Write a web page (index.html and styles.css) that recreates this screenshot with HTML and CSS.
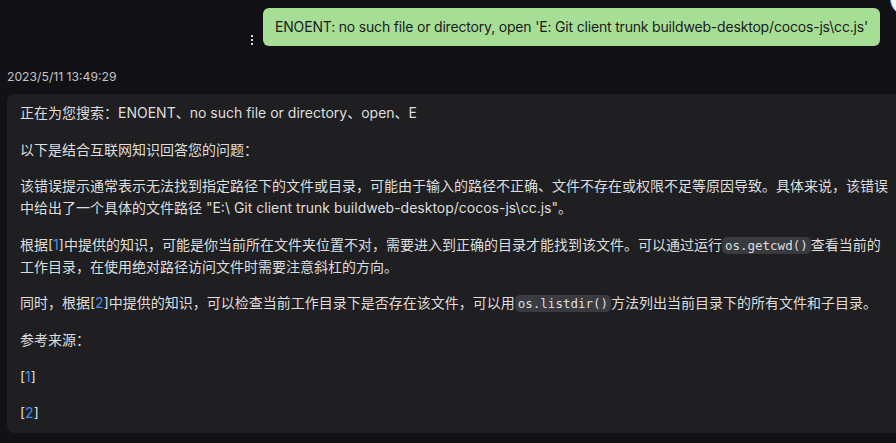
FILE: index.html
```html
<!DOCTYPE html>
<html lang="zh-CN">
<head>
<meta charset="utf-8">
<title>Chat</title>
<link rel="stylesheet" href="styles.css">
</head>
<body>
<div class="chat">
  <div class="user-row">
    <div class="more"><span></span><span></span><span></span></div>
    <div class="bubble">ENOENT: no such file or directory, open 'E: Git client trunk buildweb-desktop/cocos-js\cc.js'</div>
    <div class="avatar"></div>
  </div>
  <div class="time">2023/5/11 13:49:29</div>
  <div class="card">
    <p>正在为您搜索：ENOENT、no such file or directory、open、E</p>
    <p>以下是结合互联网知识回答您的问题：</p>
    <p>该错误提示通常表示无法找到指定路径下的文件或目录，可能由于输入的路径不正确、文件不存在或权限不足等原因导致。具体来说，该错误中给出了一个具体的文件路径 "E:\ Git client trunk buildweb-desktop/cocos-js\cc.js"。</p>
    <p>根据[<a href="#">1</a>]中提供的知识，可能是你当前所在文件夹位置不对，需要进入到正确的目录才能找到该文件。可以通过运行<code>os.getcwd()</code>查看当前的工作目录，在使用绝对路径访问文件时需要注意斜杠的方向。</p>
    <p>同时，根据[<a href="#">2</a>]中提供的知识，可以检查当前工作目录下是否存在该文件，可以用<code>os.listdir()</code>方法列出当前目录下的所有文件和子目录。</p>
    <p>参考来源：</p>
    <p>[<a href="#">1</a>]</p>
    <p>[<a href="#">2</a>]</p>
  </div>
</div>
</body>
</html>
```

FILE: styles.css
```css
html, body {
  margin: 0;
  padding: 0;
  background: #111116;
  overflow: hidden;
}
body {
  width: 896px;
  height: 443px;
  font-family: "Inter", "Noto Sans CJK SC", sans-serif;
  font-size: 14px;
  color: #dedede;
}
.chat {
  position: relative;
  padding: 8px 0 0 7px;
}
.user-row {
  display: flex;
  justify-content: flex-end;
  align-items: flex-end;
  padding-right: 16px;
  gap: 10px;
}
.more {
  display: flex;
  flex-direction: column;
  gap: 2px;
  padding-bottom: 1px;
}
.more span {
  width: 2px;
  height: 2px;
  background: #d8d8d8;
}
.bubble {
  background: #a6de96;
  color: #1b1b1b;
  border-radius: 6px;
  padding: 8px 12px;
  line-height: 22px;
  letter-spacing: -0.18px;
}
.avatar {
  position: absolute;
  right: -28px;
  top: -18px;
  width: 32px;
  height: 32px;
  border-radius: 50%;
  background: #f2f5f8;
  border: 1px solid #5aa0e6;
}
.time {
  margin-top: 23px;
  font-size: 12.2px;
  color: #c4c4c4;
  line-height: 16px;
}
.card {
  margin-top: 9px;
  width: 872px;
  background: #1f1f21;
  border-radius: 8px 0 0 8px;
  padding: 8px 12px 9px 13px;
  line-height: 22px;
}
.card p {
  margin: 0 0 14.6px;
}
.card p:last-child {
  margin-bottom: 0;
}
.card a {
  color: #3d8ef0;
  text-decoration: none;
}
.card code {
  font-family: "DejaVu Sans Mono", "Liberation Mono", monospace;
  font-size: 12.5px;
  line-height: 18px;
  background: #393b40;
  color: #dedede;
  border-radius: 5px;
  padding: 1px 3px;
}
```
